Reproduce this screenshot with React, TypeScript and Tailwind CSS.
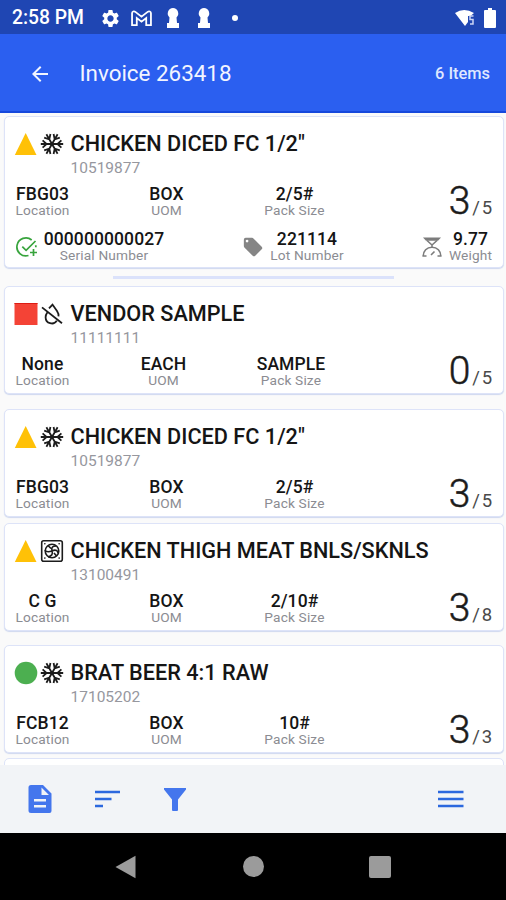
import type { ReactNode } from "react";
import { MdArrowBack, MdSettings } from "react-icons/md";

type Shape = "triangle" | "square" | "circle";
type Storage = "frozen" | "dry" | "cooler";

type Item = {
  name: string;
  sku: string;
  shape: Shape;
  storage: Storage;
  location: string;
  uom: string;
  pack: string;
  done: number;
  total: number;
  spacing: string;
};

const items: Item[] = [
  { name: 'CHICKEN DICED FC 1/2"', sku: "10519877", shape: "triangle", storage: "frozen", location: "FBG03", uom: "BOX", pack: "2/5#", done: 3, total: 5, spacing: "h-[152px]" },
  { name: "VENDOR SAMPLE", sku: "11111111", shape: "square", storage: "dry", location: "None", uom: "EACH", pack: "SAMPLE", done: 0, total: 5, spacing: "mt-[18px] h-[108px]" },
  { name: 'CHICKEN DICED FC 1/2"', sku: "10519877", shape: "triangle", storage: "frozen", location: "FBG03", uom: "BOX", pack: "2/5#", done: 3, total: 5, spacing: "mt-[15px] h-[108px]" },
  { name: "CHICKEN THIGH MEAT BNLS/SKNLS", sku: "13100491", shape: "triangle", storage: "cooler", location: "C G", uom: "BOX", pack: "2/10#", done: 3, total: 8, spacing: "mt-[6px] h-[108px]" },
  { name: "BRAT BEER 4:1 RAW", sku: "17105202", shape: "circle", storage: "frozen", location: "FCB12", uom: "BOX", pack: "10#", done: 3, total: 3, spacing: "mt-[14px] h-[108px]" },
];

function ShapeIcon({ shape }: { shape: Shape }) {
  return (
    <svg className="h-[24px] w-[24px] shrink-0" viewBox="0 0 24 24">
      {shape === "triangle" && <path d="M11.700 1 22.500 23H.8z" fill="#ffc107" />}
      {shape === "square" && (
        <>
          <path d="M.5 1h23v22H.5z" fill="#f44336" />
          <path d="M.5 1.500h23" stroke="#dd1c14" />
        </>
      )}
      {shape === "circle" && <circle cx="12" cy="12" r="11.300" fill="#4caf50" />}
    </svg>
  );
}

function StorageIcon({ storage }: { storage: Storage }) {
  return (
    <svg
      className="h-[24px] w-[24px] shrink-0"
      viewBox="0 0 24 24"
      fill="none"
      stroke="#1c1c1c"
      strokeWidth="1.8"
    >
      {storage === "frozen" &&
        [0, 60, 120, 180, 240, 300].map((angle) => (
          <path
            key={angle}
            d="M12 12H23.200M21.400 8.400 17.400 12l4 3.600"
            transform={`rotate(${angle} 12 12)`}
          />
        ))}
      {storage === "dry" && (
        <path d="M9 6.400 12.500 2.600 17 9.100c1.300 2 1.800 3.400 1.500 5.200M16.800 18.800C13.700 23.500 5.600 21.700 5.600 15.200c0-1.900.8-3.500 1.800-5M2 5.400 22 21.300" />
      )}
      {storage === "cooler" && (
        <g strokeWidth="1.6">
          <rect x="1.700" y="1.700" width="20.600" height="20.600" rx="2" />
          <circle cx="12" cy="12" r="6.800" />
          <path d="M12 12c-1-4 1-5 4-5M12 12c4-2 6 0 6 2M12 12c1 3 0 5-4 6M12 12c-3 1-6 1-7-1M8 6.500l3 3M14 14l2.500 3" />
          <path d="M4.800 4.800h.1M19.100 4.800h.1M4.800 19.100h.1M19.100 19.100h.1" strokeLinecap="round" />
        </g>
      )}
    </svg>
  );
}

function Field({ value, label, className = "" }: { value: string; label: string; className?: string }) {
  return (
    <div className={`flex flex-col items-center whitespace-nowrap ${className}`}>
      <span className="text-[17.5px] leading-[18px] font-medium tracking-[0.1px] text-[#151515]">{value}</span>
      <span className="text-[13.7px] leading-[15px] tracking-[0.15px] text-[#8b8c92]">{label}</span>
    </div>
  );
}

function Serials() {
  return (
    <div className="mt-[12px] flex items-center pr-[10px] pl-[10px]">
      <svg className="mt-px h-[24px] w-[24px]" viewBox="0 0 24 24" fill="none" stroke="#38a43d" strokeWidth="1.7">
        <path d="M13.500 20.500A9 9 0 1 1 16.700 5M20.600 10.200c.2.8.3 1.300.3 2M7.300 11.600l3.800 3.800L20.500 6M18.500 14v7M15 17.500h7" />
      </svg>
      <Field value="000000000027" label="Serial Number" className="ml-[4px] w-[122px]" />
      <svg className="ml-[76px] h-[24px] w-[24px]" viewBox="0 0 24 24" fill="#858585">
        <path
          fillRule="evenodd"
          transform="translate(1 1) scale(.92)"
          d="m21.400 11.600-9-9A2 2 0 0 0 11 2H4a2 2 0 0 0-2 2v7c0 .5.2 1 .6 1.400l9 9a2 2 0 0 0 2.800 0l7-7a2 2 0 0 0 0-2.800M5.500 7a1.500 1.500 0 1 1 0-3 1.500 1.500 0 0 1 0 3"
        />
      </svg>
      <Field value="221114" label="Lot Number" className="ml-[4px] w-[76px]" />
      <svg className="ml-auto h-[22px] w-[22px]" viewBox="0 0 22 22" fill="none" stroke="#7c7c7c" strokeWidth="1.6">
        <path d="M2 1.500h18l-3 3.200H5z" fill="#7c7c7c" stroke="none" />
        <path d="m6 4.500 5 4.500 5-4.500M11 9v2.500M5.500 20H2.200c0-5 3.500-8.800 8.800-8.800s8.800 3.800 8.800 8.800h-3.300M10 19l3.500-3.500" />
      </svg>
      <Field value="9.77" label="Weight" className="ml-[5px] w-[45px]" />
    </div>
  );
}

function Card({ item, children }: { item: Item; children?: ReactNode }) {
  return (
    <article
      className={`mr-[2px] ml-1 shrink-0 rounded-[5px] border border-[#dde3f8] bg-white pt-[15px] shadow-[0_1px_1px_#cfd8ef] ${item.spacing}`}
    >
      <div className="flex pl-[9px]">
        <ShapeIcon shape={item.shape} />
        <div className="ml-[2px]">
          <StorageIcon storage={item.storage} />
        </div>
        <div className="ml-[6.5px] whitespace-nowrap">
          <h2 className="text-[21.7px] leading-[24px] font-medium text-[#151515]">{item.name}</h2>
          <p className="mt-[3px] text-[15.5px] leading-[18px] text-[#96979e]">{item.sku}</p>
        </div>
      </div>
      <div className="mt-[8px] flex h-[33px] pl-[10px]">
        <Field value={item.location} label="Location" className="w-[55px]" />
        <Field
          value={item.uom}
          label="UOM"
          className={item.uom === "EACH" ? "ml-[66px] w-[55px]" : "ml-[69px] w-[55px]"}
        />
        <Field
          value={item.pack}
          label="Pack Size"
          className={item.uom === "EACH" ? "ml-[59px] w-[82px]" : "ml-[59.500px] w-[82px]"}
        />
        <div className="mr-[9px] ml-auto flex items-baseline text-[#1b1b1b]">
          <span className="text-[39px] leading-[33px] font-light [-webkit-text-stroke:0.5px_#1b1b1b]">{item.done}</span>
          <span className="ml-[2px] text-[18.5px] tracking-[1.8px] text-[#4a4a4a]">/{item.total}</span>
        </div>
      </div>
      {children}
    </article>
  );
}

function StatusBar() {
  return (
    <div className="flex h-[34px] shrink-0 items-center bg-[#1f46b3] pt-[2px] pr-[10px] pl-[12px] text-white">
      <span className="w-[74px] text-[19.3px] font-medium whitespace-nowrap">2:58 PM</span>
      <MdSettings className="ml-[14px] h-[21px] w-[21px]" />
      <svg className="ml-[10px] h-[17px] w-[21px]" viewBox="0 0 22 18" fill="none" stroke="white" strokeWidth="1.9">
        <path d="M1 16V3.500C1 1.500 3 .8 4.500 2L11 7l6.500-5C19 .8 21 1.500 21 3.500V16h-5V8.500l-5 3.800-5-3.800V16z" />
      </svg>
      {[0, 1].map((n) => (
        <svg key={n} className={n === 0 ? "ml-[14px] h-[20px] w-[14px]" : "ml-[17px] h-[20px] w-[14px]"} viewBox="0 0 14 20" fill="white">
          <path d="M7 0a5.500 5.500 0 0 1 3.500 9.500l.5 5.500h2v5H1v-5h2l.5-5.500A5.500 5.500 0 0 1 7 0" />
        </svg>
      ))}
      <span className="ml-[21px] h-[6px] w-[6px] rounded-full bg-white" />
      <svg className="ml-auto h-[20px] w-[22px]" viewBox="0 0 22 20">
        <path d="M1 5Q10-1 20 5L16.500 8H14v6l-3 4z" fill="white" />
        <path d="M19.500 8H16v3.500h3V16h-3" fill="none" stroke="#cbd5f5" strokeWidth="1.500" />
      </svg>
      <svg className="ml-[8px] h-[20px] w-[12px]" viewBox="0 0 12 20" fill="white">
        <path d="M4 0h4v2h3a1 1 0 0 1 1 1v16a1 1 0 0 1-1 1H1a1 1 0 0 1-1-1V3a1 1 0 0 1 1-1h3z" />
      </svg>
    </div>
  );
}

function Toolbar() {
  return (
    <nav className="flex h-[68px] shrink-0 items-center bg-[#f2f4f7] pl-[28px]">
      <svg className="h-[28px] w-[24px]" viewBox="0 0 24 28">
        <path d="M3 0h12l8.500 8.500V26a2 2 0 0 1-2 2H3a2.500 2.500 0 0 1-2.500-2.500v-23A2.500 2.500 0 0 1 3 0" fill="#4476ed" />
        <path d="M13.500 2.500V10H21zM6 14h12v2.500H6zm0 6h12v2.500H6z" fill="#f2f4f7" />
      </svg>
      <svg className="ml-[43px] h-[20px] w-[26px]" viewBox="0 0 26 20" stroke="#2c68de" strokeWidth="2.500">
        <path d="M0 3h25M0 10h16.500M0 17h8" />
      </svg>
      <svg className="ml-[42px] h-[24px] w-[24px]" viewBox="0 0 24 24" fill="#4476ed">
        <path d="M1 1h22v1.500l-8 10V23a1 1 0 0 1-1 1h-4a1 1 0 0 1-1-1V12.500L1 2.500z" />
      </svg>
      <svg className="mr-[42px] ml-auto h-[20px] w-[26px]" viewBox="0 0 26 20" stroke="#2c68de" strokeWidth="2.500">
        <path d="M0 3h25.500M0 10h25.500M0 17h25.500" />
      </svg>
    </nav>
  );
}

export default function App() {
  return (
    <div className="flex h-[900px] w-[506px] flex-col overflow-hidden bg-[#fafafa] font-['Roboto',sans-serif]">
      <StatusBar />
      <header className="flex h-[79px] shrink-0 items-center border-b-2 border-[#1648dc] bg-[#2b5ff0] pt-[2px] pr-[16px] pl-[28px] text-[#f2f5ff]">
        <MdArrowBack className="h-[24px] w-[24px]" />
        <h1 className="ml-[27.5px] text-[22.4px]">Invoice 263418</h1>
        <span className="mt-[2px] ml-auto text-[16.4px] font-medium text-[#dfe7ff]">6 Items</span>
      </header>

      <main className="flex min-h-0 flex-1 flex-col overflow-hidden pt-[3px]">
        {items.map((item, i) => (
          <Card key={i} item={item}>
            {i === 0 && (
              <>
                <Serials />
                <div className="mt-[13px] ml-[108px] h-[3px] w-[281px] bg-[#dbe2fb]" />
              </>
            )}
          </Card>
        ))}
        <div className="mt-[5px] mr-[2px] ml-1 h-5 shrink-0 rounded-[5px] border border-[#dde3f8] bg-white" />
      </main>

      <Toolbar />
      <div className="flex h-[67px] shrink-0 items-center bg-black pl-[115px]">
        <svg className="h-[24px] w-[22px]" viewBox="0 0 22 24" fill="#9b9b9b">
          <path d="M20.500.8v22.400L.5 12z" />
        </svg>
        <span className="ml-[106px] h-[21px] w-[21px] rounded-full bg-[#9b9b9b]" />
        <span className="ml-[105px] h-[22px] w-[22px] rounded-[2px] bg-[#9b9b9b]" />
      </div>
    </div>
  );
}
